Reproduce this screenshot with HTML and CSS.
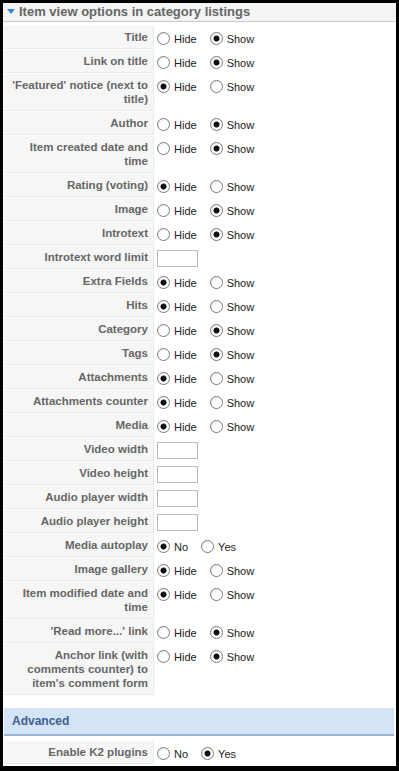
FILE: index.html
```html
<!DOCTYPE html>
<html lang="en">
<head>
  <meta charset="UTF-8" />
  <title>Item view options in category listings</title>
  <link rel="stylesheet" href="styles.css">
</head>
<body>
  <div class="panel">
    <h3 class="toggler"><span class="arrow"></span>Item view options in category listings</h3>

    <table class="params">
      <tr>
        <td class="key">Title</td>
        <td class="val"><div class="opt"><input type="radio" name="title"><label>Hide</label><input type="radio" name="title" checked><label>Show</label></div></td>
      </tr>
      <tr>
        <td class="key">Link on title</td>
        <td class="val"><div class="opt"><input type="radio" name="link"><label>Hide</label><input type="radio" name="link" checked><label>Show</label></div></td>
      </tr>
      <tr>
        <td class="key">'Featured' notice (next to title)</td>
        <td class="val"><div class="opt"><input type="radio" name="featured" checked><label>Hide</label><input type="radio" name="featured"><label>Show</label></div></td>
      </tr>
      <tr>
        <td class="key">Author</td>
        <td class="val"><div class="opt"><input type="radio" name="author"><label>Hide</label><input type="radio" name="author" checked><label>Show</label></div></td>
      </tr>
      <tr>
        <td class="key">Item created date and time</td>
        <td class="val"><div class="opt"><input type="radio" name="created"><label>Hide</label><input type="radio" name="created" checked><label>Show</label></div></td>
      </tr>
      <tr>
        <td class="key">Rating (voting)</td>
        <td class="val"><div class="opt"><input type="radio" name="rating" checked><label>Hide</label><input type="radio" name="rating"><label>Show</label></div></td>
      </tr>
      <tr>
        <td class="key">Image</td>
        <td class="val"><div class="opt"><input type="radio" name="image"><label>Hide</label><input type="radio" name="image" checked><label>Show</label></div></td>
      </tr>
      <tr>
        <td class="key">Introtext</td>
        <td class="val"><div class="opt"><input type="radio" name="intro"><label>Hide</label><input type="radio" name="intro" checked><label>Show</label></div></td>
      </tr>
      <tr>
        <td class="key">Introtext word limit</td>
        <td class="val"><input type="text" class="num"></td>
      </tr>
      <tr>
        <td class="key">Extra Fields</td>
        <td class="val"><div class="opt"><input type="radio" name="extra" checked><label>Hide</label><input type="radio" name="extra"><label>Show</label></div></td>
      </tr>
      <tr>
        <td class="key">Hits</td>
        <td class="val"><div class="opt"><input type="radio" name="hits" checked><label>Hide</label><input type="radio" name="hits"><label>Show</label></div></td>
      </tr>
      <tr>
        <td class="key">Category</td>
        <td class="val"><div class="opt"><input type="radio" name="category"><label>Hide</label><input type="radio" name="category" checked><label>Show</label></div></td>
      </tr>
      <tr>
        <td class="key">Tags</td>
        <td class="val"><div class="opt"><input type="radio" name="tags"><label>Hide</label><input type="radio" name="tags" checked><label>Show</label></div></td>
      </tr>
      <tr>
        <td class="key">Attachments</td>
        <td class="val"><div class="opt"><input type="radio" name="attach" checked><label>Hide</label><input type="radio" name="attach"><label>Show</label></div></td>
      </tr>
      <tr>
        <td class="key">Attachments counter</td>
        <td class="val"><div class="opt"><input type="radio" name="attachcount" checked><label>Hide</label><input type="radio" name="attachcount"><label>Show</label></div></td>
      </tr>
      <tr>
        <td class="key">Media</td>
        <td class="val"><div class="opt"><input type="radio" name="media" checked><label>Hide</label><input type="radio" name="media"><label>Show</label></div></td>
      </tr>
      <tr>
        <td class="key">Video width</td>
        <td class="val"><input type="text" class="num"></td>
      </tr>
      <tr>
        <td class="key">Video height</td>
        <td class="val"><input type="text" class="num"></td>
      </tr>
      <tr>
        <td class="key">Audio player width</td>
        <td class="val"><input type="text" class="num"></td>
      </tr>
      <tr>
        <td class="key">Audio player height</td>
        <td class="val"><input type="text" class="num"></td>
      </tr>
      <tr>
        <td class="key">Media autoplay</td>
        <td class="val"><div class="opt"><input type="radio" name="autoplay" checked><label>No</label><input type="radio" name="autoplay"><label>Yes</label></div></td>
      </tr>
      <tr>
        <td class="key">Image gallery</td>
        <td class="val"><div class="opt"><input type="radio" name="gallery" checked><label>Hide</label><input type="radio" name="gallery"><label>Show</label></div></td>
      </tr>
      <tr>
        <td class="key">Item modified date and time</td>
        <td class="val"><div class="opt"><input type="radio" name="modified" checked><label>Hide</label><input type="radio" name="modified"><label>Show</label></div></td>
      </tr>
      <tr>
        <td class="key">'Read more...' link</td>
        <td class="val"><div class="opt"><input type="radio" name="readmore"><label>Hide</label><input type="radio" name="readmore" checked><label>Show</label></div></td>
      </tr>
      <tr>
        <td class="key">Anchor link (with comments counter) to item's comment form</td>
        <td class="val"><div class="opt"><input type="radio" name="anchor"><label>Hide</label><input type="radio" name="anchor" checked><label>Show</label></div></td>
      </tr>
    </table>

    <div class="adv-head">Advanced</div>

    <table class="params adv">
      <tr>
        <td class="key">Enable K2 plugins</td>
        <td class="val"><div class="opt"><input type="radio" name="plugins"><label>No</label><input type="radio" name="plugins" checked><label>Yes</label></div></td>
      </tr>
    </table>
  </div>
</body>
</html>
```

FILE: styles.css
```css
html {
  background: #000;
}

body {
  margin: 0;
  font-family: "Liberation Sans", Arial, sans-serif;
  font-size: 11px;
  color: #222;
}

.panel {
  margin: 3px 3px 0;
  padding-bottom: 1px;
  background: #fff;
}

.toggler {
  display: flex;
  align-items: center;
  gap: 4px;
  margin: 0;
  height: 18px;
  padding-left: 4px;
  background: #f4f4f4;
  border-bottom: 1px solid #c8c8c8;
  font-size: 13px;
  line-height: 18px;
  font-weight: bold;
  color: #666;
}

.toggler .arrow {
  width: 0;
  height: 0;
  border-left: 4px solid transparent;
  border-right: 4px solid transparent;
  border-top: 5px solid #2f88dd;
  margin-top: -1px;
}

.params {
  width: 100%;
  table-layout: fixed;
  border-spacing: 1px;
  margin-top: 3px;
}

.params td {
  vertical-align: top;
}

td.key {
  width: 139px;
  padding: 4px 5px;
  background: #f6f6f6;
  border-bottom: 1px solid #e9e9e9;
  border-right: 1px solid #e9e9e9;
  text-align: right;
  font-size: 11.5px;
  line-height: 14px;
  font-weight: bold;
  color: #666;
}

td.val {
  padding: 4px 2px 0;
}

.opt {
  display: flex;
  align-items: flex-start;
}

.opt input[type="radio"] {
  appearance: none;
  -webkit-appearance: none;
  flex: none;
  width: 13px;
  height: 13px;
  margin: 2px 4px 0 0;
  border: 1px solid #7c7c7c;
  border-radius: 50%;
  background: #fff;
  box-shadow: inset 1px 1px 1px rgba(0, 0, 0, 0.08);
}

.opt input[type="radio"]:checked {
  background: radial-gradient(circle, #111 0, #111 2.6px, #fff 3.4px);
}

.opt label {
  padding-top: 2px;
  margin-right: 13px;
  line-height: 14px;
}

.num {
  display: block;
  width: 39px;
  height: 15px;
  margin: 0;
  padding: 0;
  border: 1px solid #bbb;
}

.adv-head {
  margin: 12px 2px 0 1px;
  height: 26px;
  padding-left: 8px;
  background: #d4e4f7;
  border-bottom: 2px solid #98b3d3;
  font-size: 12px;
  line-height: 26px;
  font-weight: bold;
  color: #3d5f8e;
}

.params.adv {
  margin-top: 4px;
}
```
